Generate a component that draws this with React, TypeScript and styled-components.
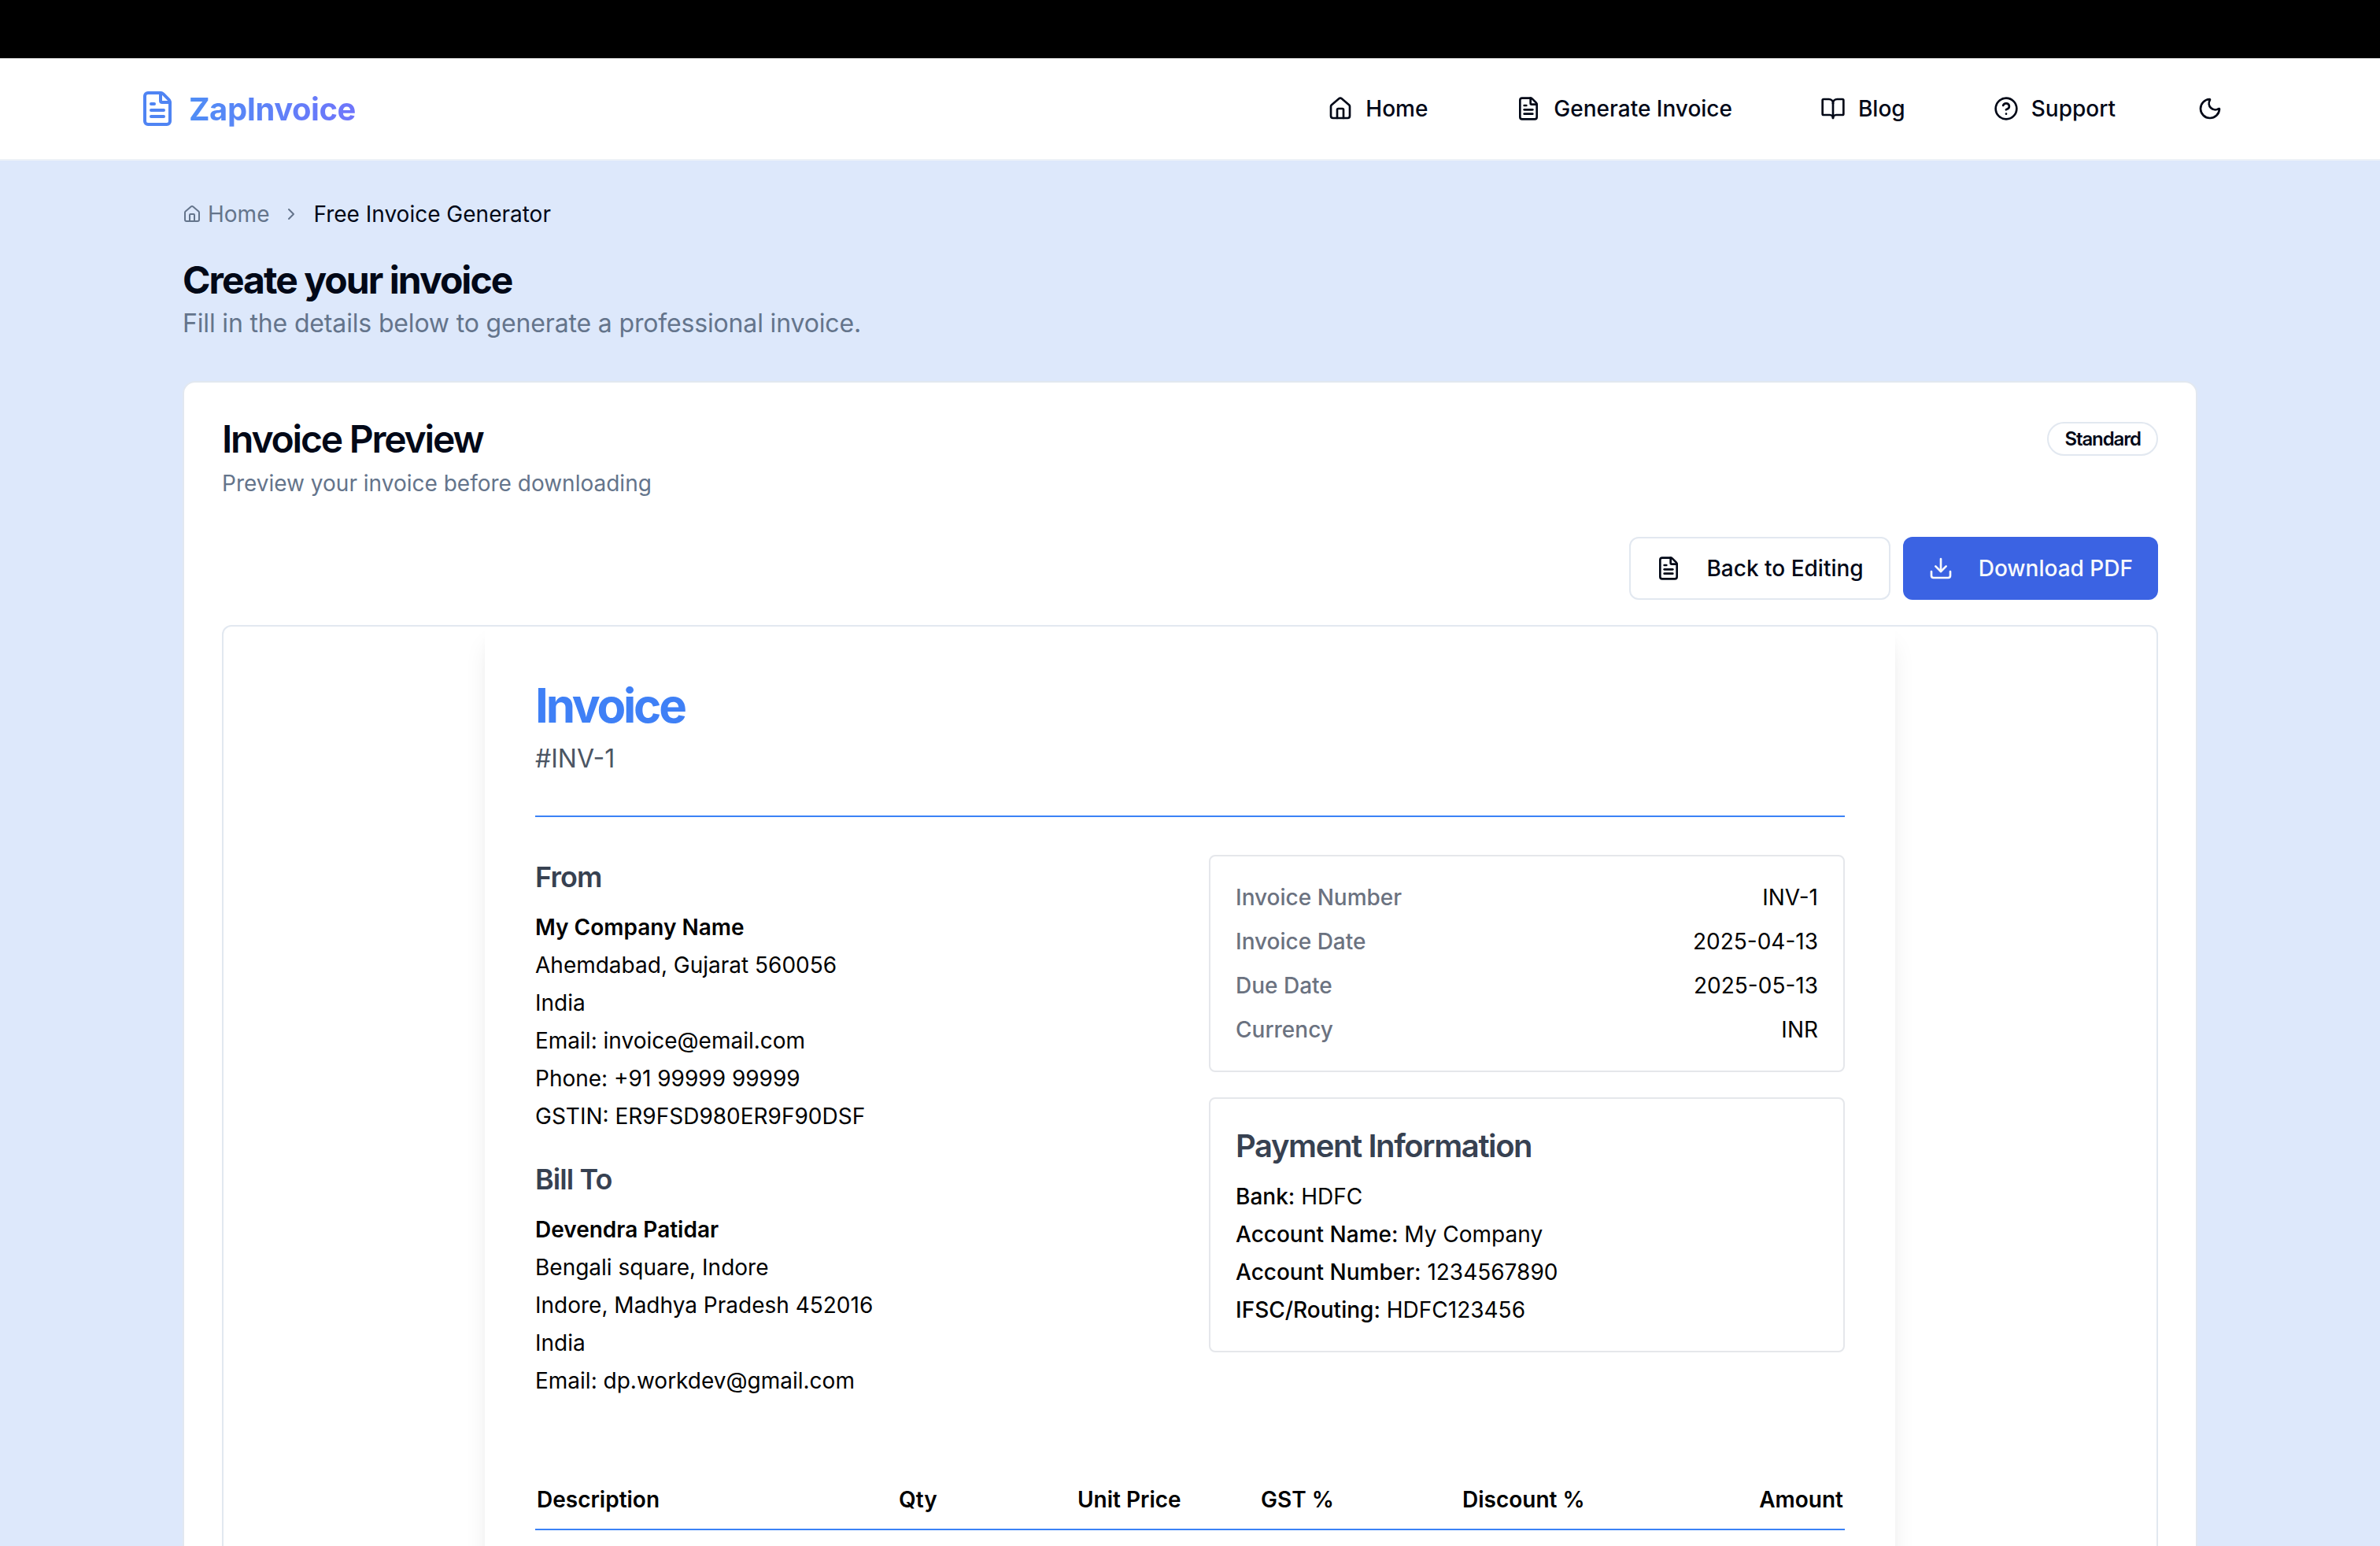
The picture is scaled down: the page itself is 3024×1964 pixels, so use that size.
import React from 'react';
import styled, { createGlobalStyle } from 'styled-components';
import { House, FileText, BookOpen, CircleHelp, Moon, Download, ChevronRight } from 'lucide-react';

const Global = createGlobalStyle`
  html, body { margin: 0; padding: 0; height: 100%; overflow: hidden; }
  body { font-family: Inter, "Noto Sans", sans-serif; background: #dde8fb; color: #020817; }
  * { box-sizing: border-box; }
  #root { height: 100%; overflow: hidden; }
`;

const TopBlack = styled.div`height: 74px; background: #000;`;

const Header = styled.header`
  height: 130px;
  background: #fff;
  border-bottom: 2px solid #eef2f7;
  padding: 0 176px;
  display: flex;
  align-items: center;
  justify-content: space-between;
`;
const Logo = styled.a`
  display: flex;
  align-items: center;
  gap: 16px;
  color: #4f84f3;
`;
const LogoText = styled.span`
  font-size: 40px;
  font-weight: 700;
  letter-spacing: -0.45px;
  background: linear-gradient(90deg, #4f8df5, #6f75fb);
  -webkit-background-clip: text;
  background-clip: text;
  color: transparent;
`;
const Nav = styled.nav`display: flex; align-items: center; gap: 48px;`;
const NavItem = styled.a`
  display: flex;
  align-items: center;
  gap: 16px;
  padding: 0 32px;
  font-size: 28px;
  font-weight: 500;
  color: #020817;
`;
const ThemeButton = styled.button`
  width: 80px;
  height: 80px;
  padding: 0;
  border: 0;
  background: transparent;
  color: #020817;
  display: flex;
  align-items: center;
  justify-content: center;
`;

const Main = styled.main`
  width: 2560px;
  margin: 0 auto;
  padding-top: 48px;
`;
const Crumbs = styled.div`
  display: flex;
  align-items: center;
  gap: 16px;
  height: 40px;
  font-size: 28px;
  color: #64748b;
`;
const CrumbHome = styled.span`display: flex; align-items: center; gap: 8px;`;
const CrumbCurrent = styled.span`color: #020817;`;
const Title = styled.h1`
  margin: 32px 0 0;
  font-size: 48px;
  line-height: 64px;
  font-weight: 700;
  letter-spacing: -1.95px;
`;
const Subtitle = styled.p`
  margin: 0;
  font-size: 32px;
  line-height: 46px;
  letter-spacing: -0.16px;
  color: #64748b;
`;

const Card = styled.section`
  margin-top: 50px;
  background: #fff;
  border: 2px solid #e2e8f0;
  border-radius: 16px;
  padding: 48px 48px 200px;
`;
const CardHead = styled.div`display: flex; justify-content: space-between; align-items: flex-start;`;
const CardTitle = styled.h2`
  margin: 0;
  font-size: 48px;
  line-height: 48px;
  font-weight: 600;
  letter-spacing: -2.2px;
`;
const CardSub = styled.p`
  margin: 12px 0 0;
  font-size: 28px;
  line-height: 40px;
  color: #64748b;
`;
const Badge = styled.span`
  display: inline-flex;
  align-items: center;
  height: 43px;
  margin-top: 2px;
  padding: 0 20px;
  border: 2px solid #e2e8f0;
  border-radius: 999px;
  font-size: 24px;
  font-weight: 600;
  letter-spacing: -1.1px;
`;
const Actions = styled.div`
  display: flex;
  justify-content: flex-end;
  gap: 16px;
  margin-top: 48px;
`;
const Button = styled.button<{ $primary?: boolean }>`
  display: flex;
  align-items: center;
  gap: 32px;
  height: 80px;
  padding: 0 32px;
  font-family: inherit;
  font-size: 28px;
  font-weight: 500;
  border-radius: 12px;
  border: ${p => (p.$primary ? '0' : '2px solid #e2e8f0')};
  background: ${p => (p.$primary ? '#3b63e3' : '#fff')};
  color: ${p => (p.$primary ? '#f8fafc' : '#020817')};
`;
const PreviewBox = styled.div`
  margin-top: 32px;
  border: 2px solid #e2e8f0;
  border-radius: 12px;
  overflow: hidden;
`;
const Paper = styled.div`
  width: 1792px;
  margin: 0 auto;
  padding: 64px;
  background: #fff;
  box-shadow: 0 20px 30px -6px rgba(0, 0, 0, 0.1), 0 8px 12px -8px rgba(0, 0, 0, 0.1);
`;
const InvoiceTitle = styled.h1`
  margin: 0;
  font-size: 60px;
  line-height: 72px;
  font-weight: 700;
  letter-spacing: -3.2px;
  color: #3f80f6;
`;
const InvoiceNo = styled.p`
  margin: 8px 0 0;
  font-size: 32px;
  line-height: 48px;
  color: #4b5563;
`;
const Divider = styled.div`
  margin-top: 48px;
  height: 2px;
  background: #3b82f6;
`;
const Columns = styled.div`
  display: grid;
  grid-template-columns: 1fr 1fr;
  gap: 48px;
  margin-top: 48px;
`;
const Party = styled.div`
  & + & { margin-top: 28px; }
`;
const PartyHeading = styled.h3`
  margin: 0 0 12px;
  font-size: 36px;
  line-height: 56px;
  font-weight: 600;
  letter-spacing: -0.9px;
  color: #374151;
`;
const Line = styled.div<{ $strong?: boolean }>`
  font-size: 28px;
  line-height: 48px;
  font-weight: ${p => (p.$strong ? 600 : 400)};
  color: #000;
`;
const Strong = styled.strong`font-weight: 500;`;
const Stack = styled.div`display: flex; flex-direction: column; gap: 32px;`;
const Box = styled.div`
  border: 2px solid #e5e7eb;
  border-radius: 8px;
  padding: 24px 32px;
`;
const PayBox = styled(Box)`padding-bottom: 28px;`;
const MetaRow = styled.div`
  display: flex;
  justify-content: space-between;
  height: 56px;
  align-items: center;
  font-size: 28px;
  color: #000;
`;
const MetaLabel = styled.span`font-weight: 500; color: #6b7280;`;
const PayHeading = styled.h3`
  margin: 8px 0 12px;
  font-size: 40px;
  line-height: 56px;
  font-weight: 600;
  letter-spacing: -1.4px;
  color: #374151;
`;
const TableHead = styled.div`
  display: grid;
  grid-template-columns: 460px 227px 233px 256px 1fr 1fr;
  margin-top: 90px;
  height: 76px;
  align-items: center;
  border-bottom: 2px solid #3b82f6;
  font-size: 28px;
  font-weight: 600;
  color: #000;
  padding: 0 2px;
`;
const AmountHead = styled.span`text-align: right;`;

export default function App() {
  return (
    <>
      <Global />
      <TopBlack />
      <Header>
        <Logo>
          <FileText size={48} strokeWidth={2} />
          <LogoText>ZapInvoice</LogoText>
        </Logo>
        <Nav>
          <NavItem><House size={32} />Home</NavItem>
          <NavItem><FileText size={32} />Generate Invoice</NavItem>
          <NavItem><BookOpen size={32} />Blog</NavItem>
          <NavItem><CircleHelp size={32} />Support</NavItem>
          <ThemeButton aria-label="Toggle theme"><Moon size={32} /></ThemeButton>
        </Nav>
      </Header>
      <Main>
        <Crumbs>
          <CrumbHome><House size={24} />Home</CrumbHome>
          <ChevronRight size={24} />
          <CrumbCurrent>Free Invoice Generator</CrumbCurrent>
        </Crumbs>
        <Title>Create your invoice</Title>
        <Subtitle>Fill in the details below to generate a professional invoice.</Subtitle>
        <Card>
          <CardHead>
            <div>
              <CardTitle>Invoice Preview</CardTitle>
              <CardSub>Preview your invoice before downloading</CardSub>
            </div>
            <Badge>Standard</Badge>
          </CardHead>
          <Actions>
            <Button><FileText size={32} />Back to Editing</Button>
            <Button $primary><Download size={32} />Download PDF</Button>
          </Actions>
          <PreviewBox>
            <Paper>
              <InvoiceTitle>Invoice</InvoiceTitle>
              <InvoiceNo>#INV-1</InvoiceNo>
              <Divider />
              <Columns>
                <div>
                  <Party>
                    <PartyHeading>From</PartyHeading>
                    <Line $strong>My Company Name</Line>
                    <Line>Ahemdabad, Gujarat 560056</Line>
                    <Line>India</Line>
                    <Line>Email: invoice@email.com</Line>
                    <Line>Phone: +91 99999 99999</Line>
                    <Line>GSTIN: ER9FSD980ER9F90DSF</Line>
                  </Party>
                  <Party>
                    <PartyHeading>Bill To</PartyHeading>
                    <Line $strong>Devendra Patidar</Line>
                    <Line>Bengali square, Indore</Line>
                    <Line>Indore, Madhya Pradesh 452016</Line>
                    <Line>India</Line>
                    <Line>Email: dp.workdev@gmail.com</Line>
                  </Party>
                </div>
                <Stack>
                  <Box>
                    <MetaRow><MetaLabel>Invoice Number</MetaLabel><span>INV-1</span></MetaRow>
                    <MetaRow><MetaLabel>Invoice Date</MetaLabel><span>2025-04-13</span></MetaRow>
                    <MetaRow><MetaLabel>Due Date</MetaLabel><span>2025-05-13</span></MetaRow>
                    <MetaRow><MetaLabel>Currency</MetaLabel><span>INR</span></MetaRow>
                  </Box>
                  <PayBox>
                    <PayHeading>Payment Information</PayHeading>
                    <Line><Strong>Bank:</Strong> HDFC</Line>
                    <Line><Strong>Account Name:</Strong> My Company</Line>
                    <Line><Strong>Account Number:</Strong> 1234567890</Line>
                    <Line><Strong>IFSC/Routing:</Strong> HDFC123456</Line>
                  </PayBox>
                </Stack>
              </Columns>
              <TableHead>
                <span>Description</span>
                <span>Qty</span>
                <span>Unit Price</span>
                <span>GST %</span>
                <span>Discount %</span>
                <AmountHead>Amount</AmountHead>
              </TableHead>
            </Paper>
          </PreviewBox>
        </Card>
      </Main>
    </>
  );
}
